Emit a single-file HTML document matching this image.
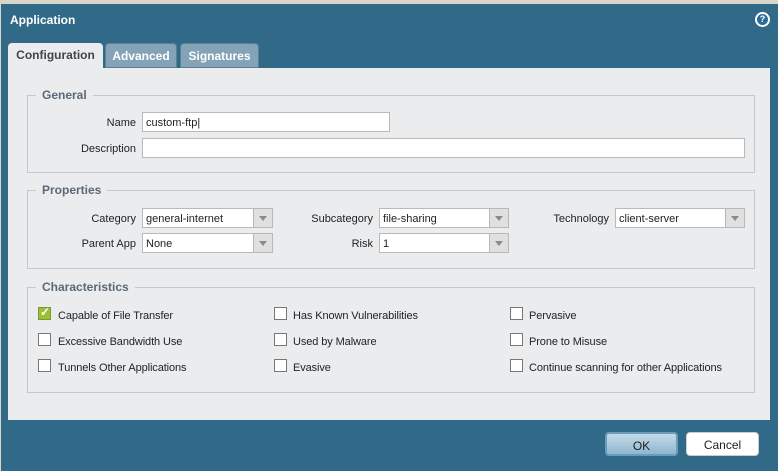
<!DOCTYPE html><html><head><style>
body{margin:0;width:778px;height:471px;overflow:hidden;background:#d8d6c8;font-family:"Liberation Sans",Arial,sans-serif;font-size:11px;color:#222;position:relative}
.dlg{position:absolute;left:1px;top:4px;width:777px;height:467px;background:#316a89}
.abs{position:absolute}
.title{left:10px;top:13px;color:#fff;font-weight:bold;font-size:12px}
.tab{position:absolute;top:43px;height:25px;border-radius:4px 4px 0 0;font-weight:bold;font-size:12px;line-height:24px;text-align:center;box-sizing:border-box}
.t1{left:8px;width:95px;background:#ebecee;color:#444}
.t2{left:105px;width:72px;background:#84a3b6;color:#fff;border:1px solid #5b7f95}
.t3{left:180px;width:79px;background:#84a3b6;color:#fff;border:1px solid #5b7f95}
.panel{position:absolute;left:8px;top:68px;width:762px;height:352px;background:#ebecee}
.fs{position:absolute;left:27px;width:728px;border:1px solid #c8c8c8;box-sizing:border-box}
.lg{position:absolute;left:8px;top:-8px;background:#ebecee;padding:0 6px;font-weight:bold;color:#5a6a78;font-size:12px}
.lbl{position:absolute;text-align:right}
.in{position:absolute;height:20px;background:#fff;border:1px solid #b9b9b9;box-sizing:border-box;padding:4px 3px 0;line-height:13px}
.dd{position:absolute;width:20px;height:20px;right:-1px;top:-1px;background:#e0e0e0;border:1px solid #b9b9b9;box-sizing:border-box}
.dd:after{content:"";position:absolute;left:5px;top:7px;border:4px solid transparent;border-top:5px solid #8a8a8a}
.cb{position:absolute;width:13px;height:13px;background:#fff;border:1px solid #777;box-sizing:border-box}
.ct{position:absolute;letter-spacing:-0.1px}
.btn{position:absolute;top:432px;height:24px;border-radius:4px;text-align:center;line-height:24px;font-size:12px;box-sizing:border-box}
</style></head><body>
<div class="dlg"></div>
<div class="abs title">Application</div>
<div class="abs" style="left:755px;top:12px;width:15px;height:15px;border-radius:50%;background:#fff;"><div style="position:absolute;left:2px;top:2px;width:11px;height:11px;border-radius:50%;background:#2a6b9c;color:#fff;font-size:9px;font-weight:bold;text-align:center;line-height:11px">?</div></div>
<div class="tab t1">Configuration</div><div class="tab t2">Advanced</div><div class="tab t3">Signatures</div>
<div class="panel"></div>
<div class="fs" style="top:95px;height:78px"><div class="lg">General</div></div>
<div class="lbl" style="left:60px;width:76px;top:117px">Name</div>
<div class="in" style="left:142px;top:112px;width:248px">custom-ftp|</div>
<div class="lbl" style="left:40px;width:96px;top:143px">Description</div>
<div class="in" style="left:142px;top:138px;width:603px"></div>
<div class="fs" style="top:190px;height:79px"><div class="lg">Properties</div></div>
<div class="lbl" style="left:40px;width:96px;top:213px">Category</div>
<div class="in" style="left:142px;top:208px;width:131px">general-internet<div class="dd"></div></div>
<div class="lbl" style="left:40px;width:96px;top:238px">Parent App</div>
<div class="in" style="left:142px;top:233px;width:131px">None<div class="dd"></div></div>
<div class="lbl" style="left:280px;width:93px;top:213px">Subcategory</div>
<div class="in" style="left:379px;top:208px;width:130px">file-sharing<div class="dd"></div></div>
<div class="lbl" style="left:280px;width:93px;top:238px">Risk</div>
<div class="in" style="left:379px;top:233px;width:130px">1<div class="dd"></div></div>
<div class="lbl" style="left:520px;width:89px;top:213px">Technology</div>
<div class="in" style="left:615px;top:208px;width:130px">client-server<div class="dd"></div></div>
<div class="fs" style="top:287px;height:106px"><div class="lg">Characteristics</div></div>
<div class="cb" style="left:38px;top:307px;background:#9cbf38;border-color:#7a9a30"><span style="position:absolute;left:1px;top:-3px;color:#fff;font-size:12px;font-weight:bold">✓</span></div><div class="ct" style="left:58px;top:310px">Capable of File Transfer</div>
<div class="cb" style="left:38px;top:333px"></div><div class="ct" style="left:58px;top:336px">Excessive Bandwidth Use</div>
<div class="cb" style="left:38px;top:359px"></div><div class="ct" style="left:58px;top:362px">Tunnels Other Applications</div>
<div class="cb" style="left:274px;top:307px"></div><div class="ct" style="left:293px;top:310px">Has Known Vulnerabilities</div>
<div class="cb" style="left:274px;top:333px"></div><div class="ct" style="left:293px;top:336px">Used by Malware</div>
<div class="cb" style="left:274px;top:359px"></div><div class="ct" style="left:293px;top:362px">Evasive</div>
<div class="cb" style="left:510px;top:307px"></div><div class="ct" style="left:529px;top:310px">Pervasive</div>
<div class="cb" style="left:510px;top:333px"></div><div class="ct" style="left:529px;top:336px">Prone to Misuse</div>
<div class="cb" style="left:510px;top:359px"></div><div class="ct" style="left:529px;top:362px">Continue scanning for other Applications</div>
<div class="btn" style="left:605px;width:73px;background:linear-gradient(#c4dbe8,#8fb6cf);border:2px solid #6c9cbb">OK</div>
<div class="btn" style="left:686px;width:73px;background:#fff;border:1px solid #ccc">Cancel</div>
</body></html>
